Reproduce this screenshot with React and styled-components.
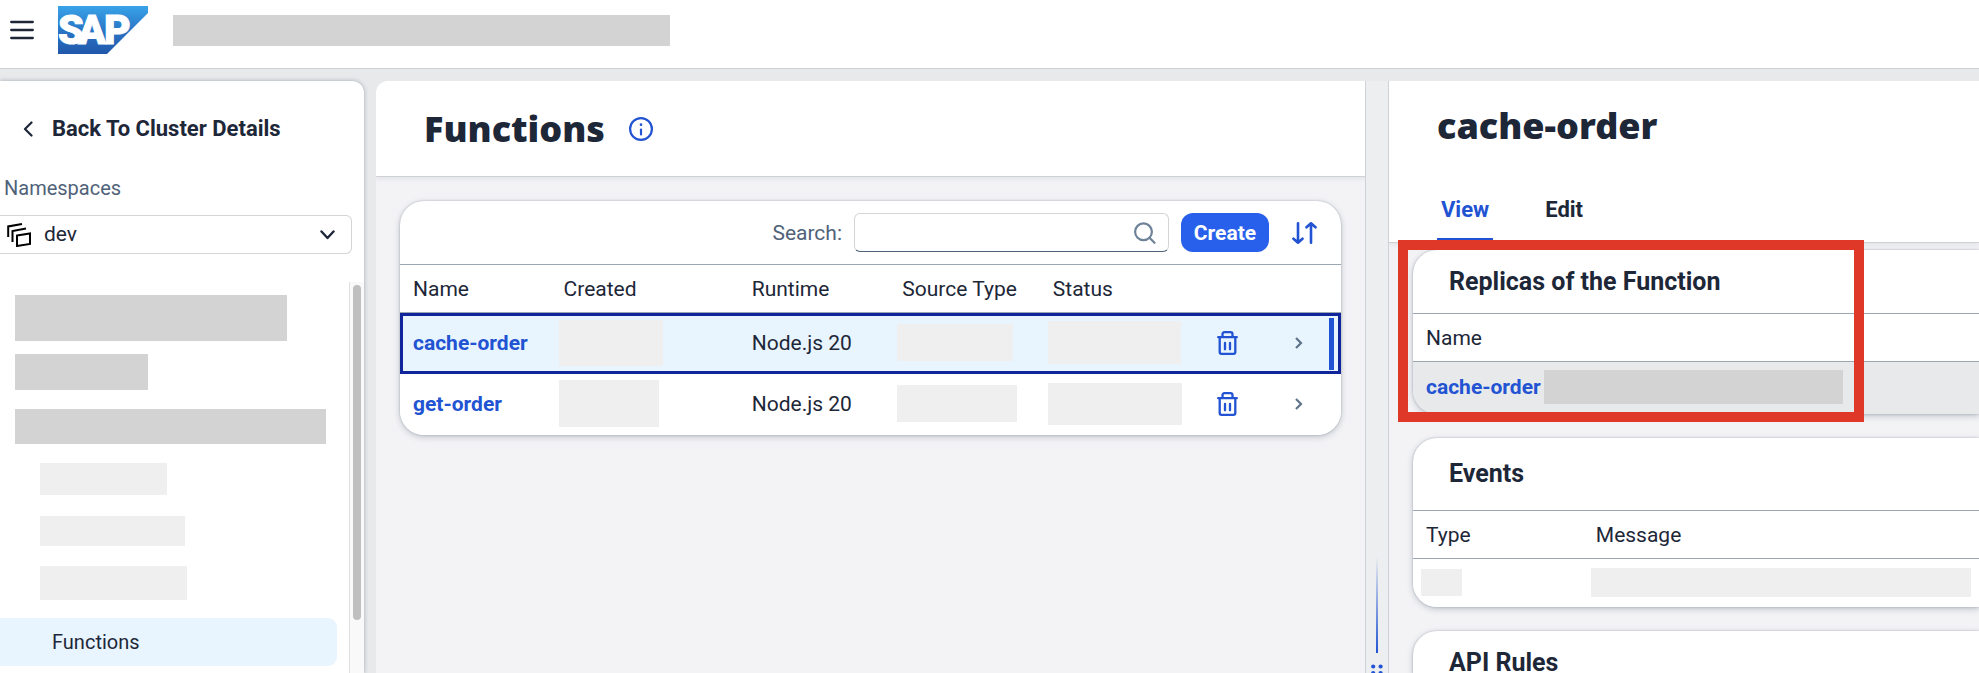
import React from "react";
import styled, { createGlobalStyle, css } from "styled-components";

const color = {
  text: "#1d2738",
  label: "#506279",
  link: "#2153d2",
  accent: "#2860ec",
  focus: "#11259a",
  selected: "#e8f5ff",
  page: "#e7e9eb",
  panel: "#f3f3f6",
  line: "#9ba6b3",
  soft: "#d3d4d8",
  dark: "#d3d3d3",
  light: "#efefef",
  mark: "#df3728",
};

const GlobalStyle = createGlobalStyle`
  *, *::before, *::after { box-sizing: border-box; }
  body {
    margin: 0;
    overflow: hidden;
    background: ${color.page};
    color: ${color.text};
    font: 400 21px/28px Roboto, "Liberation Sans", sans-serif;
  }
  h1, h2, ul { margin: 0; padding: 0; }
  button, input, select { font: inherit; color: inherit; }
  svg { display: block; flex: none; }
`;

const Shell = styled.div`
  display: flex;
  flex-direction: column;
  height: 100vh;
`;

const TopBar = styled.header`
  display: flex;
  align-items: center;
  flex: none;
  height: 69px;
  padding: 0 10px 8px;
  background: #fff;
  border-bottom: 1px solid #cfd0d2;
`;

const IconButton = styled.button`
  display: flex;
  align-items: center;
  justify-content: center;
  padding: 0;
  border: 0;
  background: none;
  color: ${(p) => p.$color || color.link};
  cursor: pointer;
`;

const LogoLink = styled.a`
  margin: 0 25px 0 24px;
`;

const Redacted = styled.span`
  display: block;
  flex: none;
  width: ${(p) => p.$w}px;
  max-width: 100%;
  height: ${(p) => p.$h}px;
  background: ${(p) => (p.$dark ? color.dark : color.light)};
`;

const Workspace = styled.div`
  display: grid;
  grid-template-columns: 364px minmax(0, 1fr);
  gap: 12px;
  flex: 1;
  min-height: 0;
  padding-top: 12px;
`;

const Sidebar = styled.nav`
  display: flex;
  flex-direction: column;
  min-height: 0;
  background: #fff;
  border-radius: 0 12px 0 0;
  box-shadow: 0 0 4px rgba(34, 53, 72, 0.35);
`;

const BackLink = styled.a`
  display: flex;
  align-items: center;
  gap: 19px;
  padding: 34px 23px 31px;
  color: ${color.text};
  font-size: 22px;
  font-weight: 700;
  text-decoration: none;
`;

const FieldLabel = styled.label`
  color: ${color.label};
`;

const NavLabel = styled(FieldLabel)`
  padding-left: 4px;
  font-size: 20px;
`;

const SelectBox = styled.div`
  display: flex;
  align-items: center;
  flex: none;
  height: 39px;
  margin: 13px 12px 28px 0;
  padding: 0 16px 0 7px;
  border: solid ${color.soft};
  border-width: 1px 1px 1px 0;
  border-radius: 0 6px 6px 0;
`;

const Select = styled.select`
  flex: 1;
  padding: 0 0 2px 13px;
  border: 0;
  background: none;
  appearance: none;
`;

const NavScroll = styled.div`
  display: flex;
  flex: 1;
  min-height: 0;
`;

const NavList = styled.ul`
  flex: 1;
  list-style: none;
  padding: 9px 12px 0 0;
`;

const NavGroup = styled.li`
  display: flex;
  align-items: center;
  height: ${(p) => (p.$nested ? 52 : 54)}px;
  padding-left: ${(p) => (p.$nested ? 40 : 15)}px;
`;

const NavLink = styled.a`
  display: block;
  margin-top: 9px;
  padding: 10px 52px;
  border-radius: 0 9px 9px 0;
  background: ${color.selected};
  color: ${color.text};
  font-size: 20px;
  text-decoration: none;
`;

const ScrollTrack = styled.div`
  width: 15px;
  padding: 3px;
  border-left: 1px solid #e0e0e0;
  background: #f9f9f9;
`;

const ScrollThumb = styled.div`
  width: 8px;
  height: 87%;
  border-radius: 4px;
  background: #bfbfbf;
`;

const Columns = styled.main`
  display: grid;
  grid-template-columns: minmax(0, 989fr) 24px minmax(0, 590fr);
  min-height: 0;
`;

const Column = styled.section`
  min-height: 0;
  overflow: hidden;
  background: ${color.panel};
  border-radius: ${(p) => (p.$rounded ? "12px 0 0 0" : 0)};
`;

const ColumnHeader = styled.div`
  position: relative;
  background: #fff;
  border-bottom: 1px solid #d0d1d3;
  box-shadow: 0 2px 4px rgba(34, 53, 72, 0.08);
`;

const ListHeader = styled(ColumnHeader)`
  display: flex;
  align-items: center;
  gap: 24px;
  height: 96px;
  padding: 0 48px;
`;

const DetailHeader = styled(ColumnHeader)`
  display: flex;
  flex-direction: column;
  justify-content: space-between;
  height: 162px;
  padding: 24px 48px 0;
`;

const Title = styled.h1`
  font-family: "Noto Sans", "Open Sans", sans-serif;
  font-size: 36px;
  line-height: 42px;
  font-weight: 900;
`;

const Tabs = styled.div`
  display: flex;
  gap: 48px;
`;

const Tab = styled.button`
  padding: 0 4px 14px;
  border: 0;
  border-bottom: 4px solid ${(p) => (p.$active ? color.link : "transparent")};
  background: none;
  color: ${(p) => (p.$active ? color.link : color.text)};
  font-size: 22px;
  font-weight: 700;
`;

const ListBody = styled.div`
  padding: 24px;
`;

const DetailBody = styled.div`
  display: flex;
  flex-direction: column;
  gap: 24px;
  padding: 7px 0 0 24px;
`;

const Card = styled.section`
  overflow: hidden;
  background: #fff;
  border-radius: 24px;
  box-shadow: 0 0 2px rgba(34, 53, 72, 0.3), 0 2px 6px rgba(34, 53, 72, 0.25);
`;

const DetailCard = styled(Card)`
  border-radius: 24px 0 0 24px;
`;

const Marked = styled.div`
  position: relative;
`;

const Marker = styled.div`
  position: absolute;
  top: -10px;
  left: -15px;
  width: 466px;
  bottom: -8px;
  border: 10px solid ${color.mark};
  pointer-events: none;
`;

const CardTitle = styled.h2`
  display: flex;
  align-items: center;
  height: ${(p) => (p.$tall ? 73 : 64)}px;
  padding-left: 36px;
  border-bottom: 1px solid ${color.line};
  font-size: 25px;
  line-height: 32px;
  font-weight: 700;
`;

const Toolbar = styled.div`
  display: flex;
  align-items: center;
  justify-content: flex-end;
  height: 64px;
  padding: 0 24px 0 12px;
  border-bottom: 1px solid ${color.line};
`;

const SearchBox = styled.div`
  display: flex;
  align-items: center;
  width: 315px;
  height: 39px;
  margin: 0 12px;
  padding: 0 12px 0 8px;
  border: 1px solid ${color.soft};
  border-bottom-color: ${color.label};
  border-radius: 6px;
`;

const SearchInput = styled.input`
  flex: 1;
  min-width: 0;
  border: 0;
  outline: 0;
  background: none;
`;

const PrimaryButton = styled.button`
  width: 88px;
  height: 39px;
  margin-right: 23px;
  padding: 0;
  border: 0;
  border-radius: 12px;
  background: ${color.accent};
  color: #fff;
  font-weight: 700;
`;

const Table = styled.table`
  width: 100%;
  table-layout: fixed;
  border-spacing: 0;
  text-align: left;
`;

const Th = styled.th`
  height: 48px;
  width: ${(p) => p.$w};
  padding: 0 13px;
  border-bottom: 1px solid ${color.line};
  font-weight: 400;
`;

const Row = styled.tr`
  height: ${(p) => p.$h || 61}px;
  background: ${(p) => (p.$shaded ? color.page : "#fff")};
  ${(p) =>
    p.$selected &&
    css`
      background: ${color.selected};
      outline: 3px solid ${color.focus};
      outline-offset: -3px;
    `}
`;

const Td = styled.td`
  padding: 0 ${(p) => (p.$masked ? 8 : 13)}px 2px;
`;

const ActionTd = styled.td`
  padding: 0 ${(p) => (p.$last ? 8 : 2)}px 2px 0;
  ${(p) => p.$current && css`
    background: linear-gradient(${color.link}, ${color.link}) right 7px center / 5px 52px no-repeat;
  `}
`;

const CellButton = styled(IconButton)`
  width: 100%;
`;

const RowLink = styled.a`
  color: ${color.link};
  font-weight: 700;
  text-decoration: none;
`;

const InlineCell = styled.div`
  display: flex;
  align-items: center;
  gap: 3px;
`;

const Splitter = styled.div`
  display: flex;
  flex-direction: column;
  align-items: center;
  justify-content: flex-end;
  gap: 11px;
  overflow: hidden;
  border: solid #cfd1d4;
  border-width: 0 1px;
  background: #eceef0;
`;

const SplitLine = styled.div`
  width: 2px;
  height: 96px;
  background: linear-gradient(transparent, ${color.link});
`;

const stroke = { fill: "none", stroke: "currentColor", strokeLinecap: "round", strokeLinejoin: "round" };

const MenuIcon = () => (
  <svg width="24" height="20" viewBox="0 0 24 20" {...stroke} strokeWidth="2.3">
    <path d="M1.200 2h21.600M1.200 10h21.600M1.200 18h21.600" />
  </svg>
);

const Logo = () => (
  <svg width="90" height="48" viewBox="0 0 90 48" role="img" aria-label="SAP">
    <defs>
      <linearGradient id="sap" x1="0" y1="0" x2="0" y2="1">
        <stop offset="0" stopColor="#38a3e8" />
        <stop offset="0.5" stopColor="#2a76c6" />
        <stop offset="1" stopColor="#2157ab" />
      </linearGradient>
    </defs>
    <path d="M0 0h90v7L49 48H0z" fill="url(#sap)" />
    <text x="0 20 46" y="38" fill="#fff" stroke="#fff" strokeWidth="1" fontFamily="Roboto, sans-serif" fontSize="41" fontWeight="900">SAP</text>
  </svg>
);

const BackIcon = () => (
  <svg width="10" height="16" viewBox="0 0 10 16" {...stroke} strokeWidth="2.2">
    <path d="M8.500 1.500 2 8l6.500 6.500" />
  </svg>
);

const NamespaceIcon = () => (
  <svg width="24" height="24" viewBox="0 0 24 24" fill="none" stroke="#000" strokeWidth="2">
    <path d="M1.200 14V3.400L15 1M5.500 19V8L19 5.500M10 12.500l13-2v10.500l-13 2z" />
  </svg>
);

const DownIcon = () => (
  <svg width="15" height="10" viewBox="0 0 15 10" {...stroke} strokeWidth="2.4">
    <path d="M1.500 1.500 7.500 8l6-6.500" />
  </svg>
);

const InfoIcon = () => (
  <svg width="24" height="24" viewBox="0 0 24 24" {...stroke} strokeWidth="2.2">
    <circle cx="12" cy="12" r="10.900" />
    <path d="M12 12.500v5" />
    <path d="M12 7.500v.2" strokeWidth="2.600" />
  </svg>
);

const SearchIcon = () => (
  <svg width="22" height="22" viewBox="0 0 22 22" fill="none" stroke="#6e8298" strokeWidth="2.200" strokeLinecap="round">
    <circle cx="9.500" cy="9.800" r="8.400" />
    <path d="m15.500 15.800 5 5" />
  </svg>
);

const SortIcon = () => (
  <svg width="25" height="22" viewBox="0 0 25 22" {...stroke} strokeWidth="2.600">
    <path d="M6 1.300v19.400M1.500 16.700 6 20.700l4.500-4M19 20.700V1.300M14.500 5.300 19 1.300l4.500 4" />
  </svg>
);

const TrashIcon = () => (
  <svg width="21" height="24" viewBox="0 0 21 24" {...stroke} strokeWidth="2.300">
    <path d="M1.200 6.200h18.600M5.500 6V3.200q0-2 2-2h6q2 0 2 2v2.800M2.700 6.200V21q0 1.800 1.800 1.800h12q1.800 0 1.800-1.800V6.200" />
    <path d="M8 12v6.300M13 12v6.300" />
  </svg>
);

const NextIcon = () => (
  <svg width="8" height="12" viewBox="0 0 8 12" fill="none" stroke="#5f7389" strokeWidth="2.200">
    <path d="m1 1 5 5-5 5" />
  </svg>
);

const GripIcon = () => (
  <svg width="12" height="9" viewBox="0 0 12 9" fill={color.link}>
    <circle cx="2.200" cy="2.500" r="2.100" />
    <circle cx="9.600" cy="2.500" r="2.100" />
    <circle cx="2.200" cy="9" r="2.100" />
    <circle cx="9.600" cy="9" r="2.100" />
  </svg>
);

const navGroups = [
  { w: 272, h: 46, dark: true },
  { w: 133, h: 36, dark: true },
  { w: 311, h: 35, dark: true },
  { w: 127, h: 32, nested: true },
  { w: 145, h: 30, nested: true },
  { w: 147, h: 34, nested: true },
];

const functions = [
  { name: "cache-order", runtime: "Node.js 20", selected: true, masks: [[104, 46], [116, 37], [133, 43]] },
  { name: "get-order", runtime: "Node.js 20", masks: [[100, 47], [120, 37], [134, 42]] },
];

export default function App() {
  return (
    <>
      <GlobalStyle />
      <Shell>
        <TopBar>
          <IconButton $color={color.text} aria-label="Menu"><MenuIcon /></IconButton>
          <LogoLink href="#home"><Logo /></LogoLink>
          <Redacted $dark $w={497} $h={31} />
        </TopBar>
        <Workspace>
          <Sidebar>
            <BackLink href="#cluster"><BackIcon />Back To Cluster Details</BackLink>
            <NavLabel htmlFor="namespace">Namespaces</NavLabel>
            <SelectBox>
              <NamespaceIcon />
              <Select id="namespace" defaultValue="dev"><option>dev</option></Select>
              <DownIcon />
            </SelectBox>
            <NavScroll>
              <NavList>
                {navGroups.map((g, i) => (
                  <NavGroup key={i} $nested={g.nested}>
                    <Redacted $dark={g.dark} $w={g.w} $h={g.h} />
                  </NavGroup>
                ))}
                <li><NavLink href="#functions">Functions</NavLink></li>
              </NavList>
              <ScrollTrack><ScrollThumb /></ScrollTrack>
            </NavScroll>
          </Sidebar>
          <Columns>
            <Column $rounded>
              <ListHeader>
                <Title>Functions</Title>
                <IconButton aria-label="About functions"><InfoIcon /></IconButton>
              </ListHeader>
              <ListBody>
                <Card>
                  <Toolbar>
                    <FieldLabel htmlFor="search">Search:</FieldLabel>
                    <SearchBox>
                      <SearchInput id="search" type="text" />
                      <SearchIcon />
                    </SearchBox>
                    <PrimaryButton>Create</PrimaryButton>
                    <IconButton aria-label="Sort"><SortIcon /></IconButton>
                  </Toolbar>
                  <Table>
                    <thead>
                      <tr>
                        <Th $w="16%">Name</Th>
                        <Th $w="20%">Created</Th>
                        <Th $w="16%">Runtime</Th>
                        <Th $w="16%">Source Type</Th>
                        <Th $w="16%">Status</Th>
                        <Th $w="8%" />
                        <Th $w="8%" />
                      </tr>
                    </thead>
                    <tbody>
                      {functions.map((f) => (
                        <Row key={f.name} $selected={f.selected}>
                          <Td><RowLink href={`#${f.name}`}>{f.name}</RowLink></Td>
                          <Td $masked><Redacted $w={f.masks[0][0]} $h={f.masks[0][1]} /></Td>
                          <Td>{f.runtime}</Td>
                          <Td $masked><Redacted $w={f.masks[1][0]} $h={f.masks[1][1]} /></Td>
                          <Td $masked><Redacted $w={f.masks[2][0]} $h={f.masks[2][1]} /></Td>
                          <ActionTd><CellButton aria-label={`Delete ${f.name}`}><TrashIcon /></CellButton></ActionTd>
                          <ActionTd $last $current={f.selected}>
                            <CellButton aria-label={`Open ${f.name}`}><NextIcon /></CellButton>
                          </ActionTd>
                        </Row>
                      ))}
                    </tbody>
                  </Table>
                </Card>
              </ListBody>
            </Column>
            <Splitter>
              <SplitLine />
              <GripIcon />
            </Splitter>
            <Column>
              <DetailHeader>
                <Title as="h2">cache-order</Title>
                <Tabs role="tablist">
                  <Tab role="tab" aria-selected="true" $active>View</Tab>
                  <Tab role="tab" aria-selected="false">Edit</Tab>
                </Tabs>
              </DetailHeader>
              <DetailBody>
                <Marked>
                  <DetailCard>
                    <CardTitle>Replicas of the Function</CardTitle>
                    <Table>
                      <thead><tr><Th>Name</Th></tr></thead>
                      <tbody>
                        <Row $shaded $h={52}>
                          <Td>
                            <InlineCell>
                              <RowLink href="#replica">cache-order</RowLink>
                              <Redacted $dark $w={299} $h={34} />
                            </InlineCell>
                          </Td>
                        </Row>
                      </tbody>
                    </Table>
                  </DetailCard>
                  <Marker />
                </Marked>
                <DetailCard>
                  <CardTitle $tall>Events</CardTitle>
                  <Table>
                    <thead><tr><Th $w="30%">Type</Th><Th>Message</Th></tr></thead>
                    <tbody>
                      <Row $h={48}>
                        <Td $masked><Redacted $w={41} $h={27} /></Td>
                        <Td $masked><Redacted $w={381} $h={29} /></Td>
                      </Row>
                    </tbody>
                  </Table>
                </DetailCard>
                <DetailCard>
                  <CardTitle>API Rules</CardTitle>
                </DetailCard>
              </DetailBody>
            </Column>
          </Columns>
        </Workspace>
      </Shell>
    </>
  );
}
